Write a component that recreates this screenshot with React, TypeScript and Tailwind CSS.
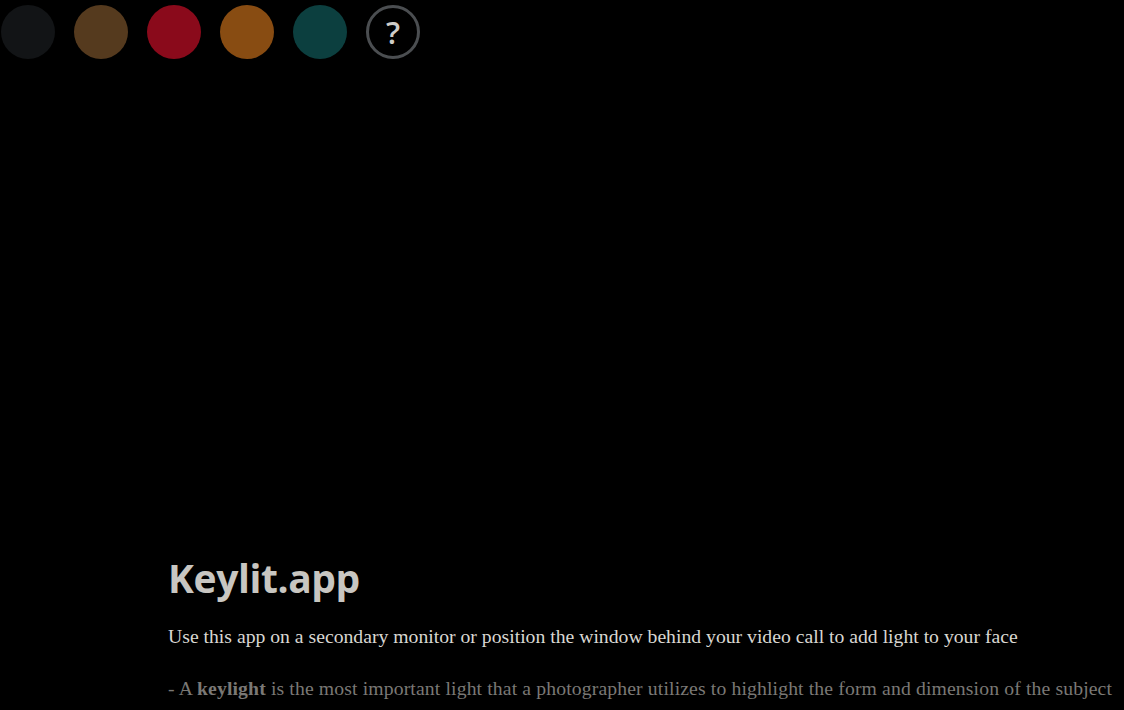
import React from "react";

export default function App() {
  return (
    <div className="w-[1124px] h-[710px] bg-black overflow-hidden">
      <div className="flex gap-[19px] pt-[5px] pl-[1px]">
        <div className="w-[54px] h-[54px] rounded-full bg-[#121416]" />
        <div className="w-[54px] h-[54px] rounded-full bg-[#553a1e]" />
        <div className="w-[54px] h-[54px] rounded-full bg-[#8a0a1b]" />
        <div className="w-[54px] h-[54px] rounded-full bg-[#884c12]" />
        <div className="w-[54px] h-[54px] rounded-full bg-[#0c3f3f]" />
        <div className="w-[54px] h-[54px] rounded-full border-[3px] border-[#4b4e51] flex items-center justify-center text-[#cfcdc8] text-[31px] font-semibold leading-none font-['Open_Sans',sans-serif]">
          ?
        </div>
      </div>
      <div className="pl-[168px] mt-[495px]">
        <h1 className="text-[39px] tracking-[-0.4px] font-bold text-[#c8c6c1] leading-[48px] font-['Open_Sans',sans-serif]">
          Keylit.app
        </h1>
        <p className="mt-[22px] text-[19.7px] text-[#d9d7d2] leading-[24px] whitespace-nowrap font-['Liberation_Serif',serif]">
          Use this app on a secondary monitor or position the window behind your video call to add light to your face
        </p>
        <p className="mt-[28px] text-[19.7px] tracking-[0.13px] text-[#7a7875] leading-[24px] whitespace-nowrap font-['Liberation_Serif',serif]">
          - A <b className="font-bold">keylight</b> is the most important light that a photographer utilizes to highlight the form and dimension of the subject
        </p>
      </div>
    </div>
  );
}
